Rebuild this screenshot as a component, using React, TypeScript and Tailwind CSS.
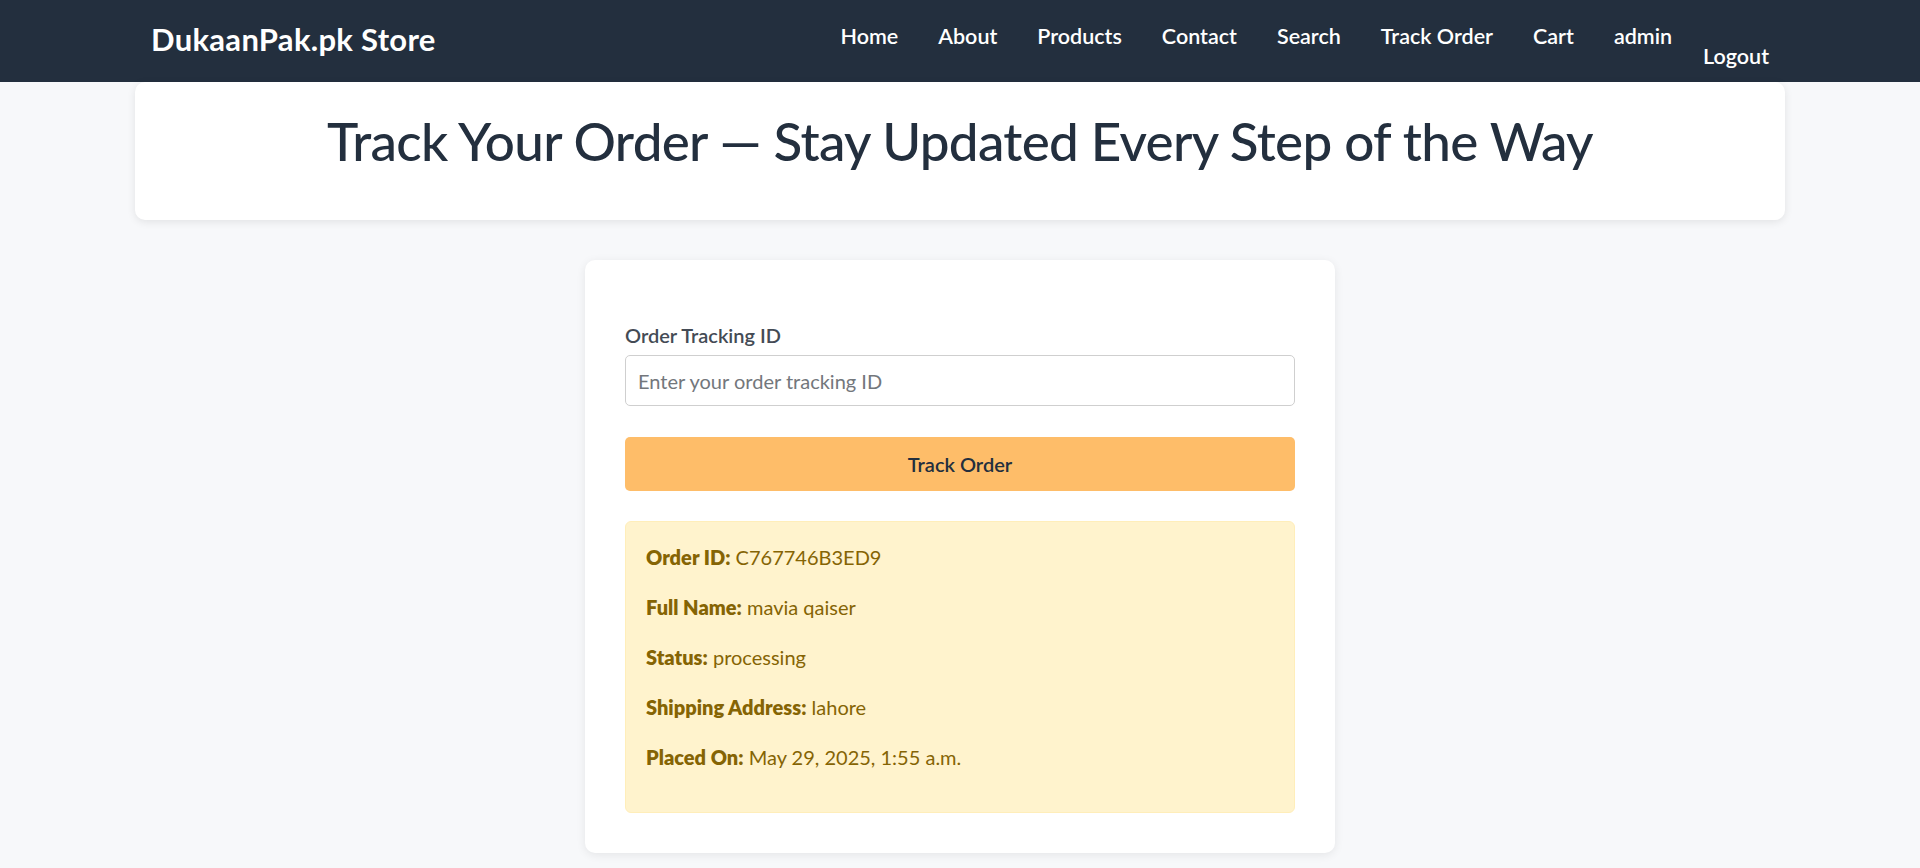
import React from "react";

const navItems = ["Home", "About", "Products", "Contact", "Search", "Track Order", "Cart", "admin"];

const details: [string, string][] = [
  ["Order ID:", "C767746B3ED9"],
  ["Full Name:", "mavia qaiser"],
  ["Status:", "processing"],
  ["Shipping Address:", "lahore"],
  ["Placed On:", "May 29, 2025, 1:55 a.m."],
];

export default function App() {
  return (
    <div className="min-h-screen bg-[#f7f8fa] font-['Lato',sans-serif]">
      <nav className="h-[82px] bg-[#232f3e]">
        <div className="mx-auto flex w-[1650px] justify-between px-[16px]">
          <a className="pt-[21px] text-[31px] font-bold leading-[37px] tracking-[0.3px] text-white">DukaanPak.pk Store</a>
          <ul className="flex gap-[40px] pt-[23px] text-[21.5px] font-semibold leading-[26px] text-white">
            {navItems.map((item) => (
              <li key={item}>
                <a>{item}</a>
              </li>
            ))}
            <li className="-ml-[9px] mt-[20px]">
              <button className="font-semibold text-white">Logout</button>
            </li>
          </ul>
        </div>
      </nav>

      <div className="mx-auto w-[1650px] rounded-[10px] bg-white pb-[47px] pt-[26px] shadow-[0_2px_8px_rgba(0,0,0,0.09)]">
        <h1 className="text-center text-[53px] font-medium leading-[65px] tracking-[-0.7px] text-[#232f3e]">
          Track Your Order — Stay Updated Every Step of the Way
        </h1>
      </div>

      <div className="mx-auto mt-[40px] w-[750px] rounded-[10px] bg-white px-[40px] pb-[40px] pt-[60px] shadow-[0_2px_10px_rgba(0,0,0,0.08)]">
        <label className="mb-[5px] block text-[20px] font-semibold leading-[30px] text-[#444b55]">
          Order Tracking ID
        </label>
        <input
          className="block h-[51px] w-full rounded-[5px] border border-[#cfcfcf] px-[12px] text-[20px] outline-none placeholder:text-[#73777c]"
          placeholder="Enter your order tracking ID"
        />
        <button className="mt-[31px] block h-[54px] w-full rounded-[5px] bg-[#febd69] text-[20px] font-semibold text-[#232f3e]">
          Track Order
        </button>
        <div className="mt-[30px] rounded-[6px] border border-[#ffeeba] bg-[#fff3cd] px-[20px] pt-[20px] text-[20px] leading-[30px] text-[#856404]">
          {details.map(([k, v]) => (
            <p key={k} className="mb-[20px]">
              <strong className="font-extrabold">{k}</strong> {v}
            </p>
          ))}
          <div className="h-[20px]" />
        </div>
      </div>
    </div>
  );
}
